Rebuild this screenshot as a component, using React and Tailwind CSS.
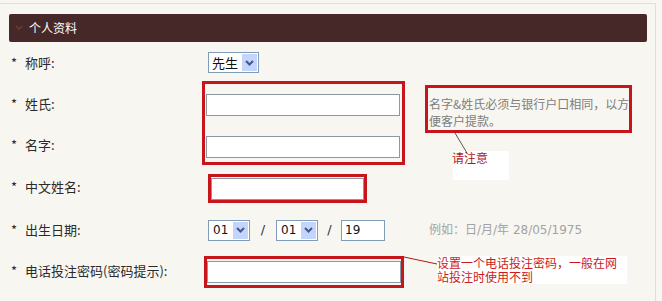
import React from "react";

const CJK = "font-['Noto_Sans_CJK_SC',sans-serif]";
const NUM = "font-['DejaVu_Sans','Noto_Sans_CJK_SC',sans-serif]";

function Chevron() {
  return (
    <svg width="9" height="6" viewBox="0 0 9 6">
      <path d="M1 1 L4.5 4.5 L8 1" fill="none" stroke="#3f5a8f" strokeWidth="2" />
    </svg>
  );
}

function Select({ value, width, cls = "" }) {
  return (
    <div
      className={`flex h-[21px] items-stretch border border-[#7f9db9] bg-white ${cls}`}
      style={{ width }}
    >
      <span className={`flex-1 pl-[3px] text-[13px] leading-[19px] text-[#111] ${CJK}`}>{value}</span>
      <span className="m-[1px] flex w-[15px] items-center justify-center bg-[#c4d4fb]">
        <Chevron />
      </span>
    </div>
  );
}

function DateSelect({ value }) {
  return (
    <div className="flex h-[21px] w-[42px] items-stretch border border-[#7f9db9] bg-white">
      <span className={`flex-1 pl-[4px] text-[12px] leading-[19px] text-[#111] ${NUM}`}>{value}</span>
      <span className="m-[1px] flex w-[15px] items-center justify-center bg-[#c4d4fb]">
        <Chevron />
      </span>
    </div>
  );
}

function Field({ cls = "" }) {
  return (
    <input
      type="text"
      readOnly
      className={`block h-[22px] border border-[#8c98a4] bg-white outline-none ${cls}`}
    />
  );
}

function Label({ children }) {
  return (
    <div className={`flex items-center pl-[11px] text-[13px] leading-[16px] text-[#2a2a2a] ${CJK}`}>
      <span className="w-[14px]">*</span>
      <span>{children}</span>
    </div>
  );
}

export default function App() {
  return (
    <div className={`relative h-[301px] w-[662px] overflow-hidden bg-[#f8f6f0] ${CJK}`}>
      <div className="mt-[3px] h-[298px] w-[656px] border-t border-r border-[#e1ded4]">
        {/* header */}
        <div className="ml-[9px] mt-[10px] flex h-[28px] w-[638px] items-center rounded-[2px] bg-[#472828]">
          <svg className="ml-[6px]" width="8" height="6" viewBox="0 0 8 6">
            <path d="M1 1 L4 4 L7 1" fill="none" stroke="#6d3a2e" strokeWidth="1.6" />
          </svg>
          <span className="ml-[6px] text-[12px] leading-[16px] text-white">个人资料</span>
        </div>

        {/* form grid */}
        <div className="grid grid-cols-[206px_219px_1fr] grid-rows-[41px_41px_42px_41px_45px_38px]">
          {/* row 1 */}
          <Label>称呼:</Label>
          <div className="flex items-center">
            <Select value="先生" width="51px" cls="ml-[2px]" />
          </div>
          <div />

          {/* row 2 */}
          <Label>姓氏:</Label>
          <div className="flex items-center pt-[3px]">
            <Field cls="w-[194px]" />
          </div>
          <div className="row-span-2 pl-[4px] pt-[12px]">
            <p className="w-[204px] text-[12px] leading-[17px] text-[#7d7d7d]">
              名字&amp;姓氏必须与银行户口相同，以方便客户提款。
            </p>
          </div>

          {/* row 3 */}
          <Label>名字:</Label>
          <div className="flex items-center pt-[3px]">
            <Field cls="w-[194px]" />
          </div>

          {/* row 4 */}
          <Label>中文姓名:</Label>
          <div className="flex items-center pt-[4px]">
            <Field cls="ml-[5px] h-[21px] w-[153px]" />
          </div>
          <div />

          {/* row 5 */}
          <Label>出生日期:</Label>
          <div className="flex items-center pt-[1px]">
            <div className="ml-[2px]">
              <DateSelect value="01" />
            </div>
            <span className={`w-[26px] text-center text-[13px] text-[#333] ${NUM}`}>/</span>
            <DateSelect value="01" />
            <span className={`w-[23px] text-center text-[13px] text-[#333] ${NUM}`}>/</span>
            <div className={`flex h-[21px] w-[44px] items-center border border-[#7f9db9] bg-white pl-[3px] text-[12px] text-[#111] ${NUM}`}>
              19
            </div>
          </div>
          <div className="flex items-center pl-[4px] pt-[1px]">
            <span className={`text-[12px] leading-[16px] text-[#a3a3a3] ${NUM}`}>例如：日/月/年 28/05/1975</span>
          </div>

          {/* row 6 */}
          <Label>电话投注密码(密码提示):</Label>
          <div className="flex items-center pt-[2px]">
            <Field cls="ml-[1px] w-[194px]" />
          </div>
          <div />
        </div>
      </div>

      {/* annotation overlays */}
      <div className="absolute left-[202px] top-[81px] h-[84px] w-[203px] border-[3px] border-[#c8151b]" />
      <div className="absolute left-[208px] top-[174px] h-[29px] w-[159px] border-[3px] border-[#c8151b]" />
      <div className="absolute left-[204px] top-[256px] h-[32px] w-[200px] border-[3px] border-[#c8151b]" />
      <div className="absolute left-[425px] top-[85px] h-[48px] w-[207px] border-[3px] border-[#c8151b]" />

      <div className="absolute left-[453px] top-[151px] flex h-[29px] w-[56px] items-start bg-white">
        <span className="-ml-[1px] mt-[-1px] text-[12px] leading-[16px] text-[#b0161a]">请注意</span>
      </div>

      <div className="absolute left-[437px] top-[256px] h-[28px] w-[190px] bg-white">
        <p className="text-[12px] leading-[14px] text-[#cc1b1b]">
          设置一个电话投注密码，一般在网
          <br />
          站投注时使用不到
        </p>
      </div>

      <svg className="pointer-events-none absolute left-0 top-0" width="662" height="301">
        <line x1="455" y1="133" x2="467" y2="153" stroke="#3a2a2a" strokeWidth="0.8" />
        <line x1="404" y1="257" x2="437" y2="264" stroke="#b01818" strokeWidth="1" />
      </svg>
    </div>
  );
}
